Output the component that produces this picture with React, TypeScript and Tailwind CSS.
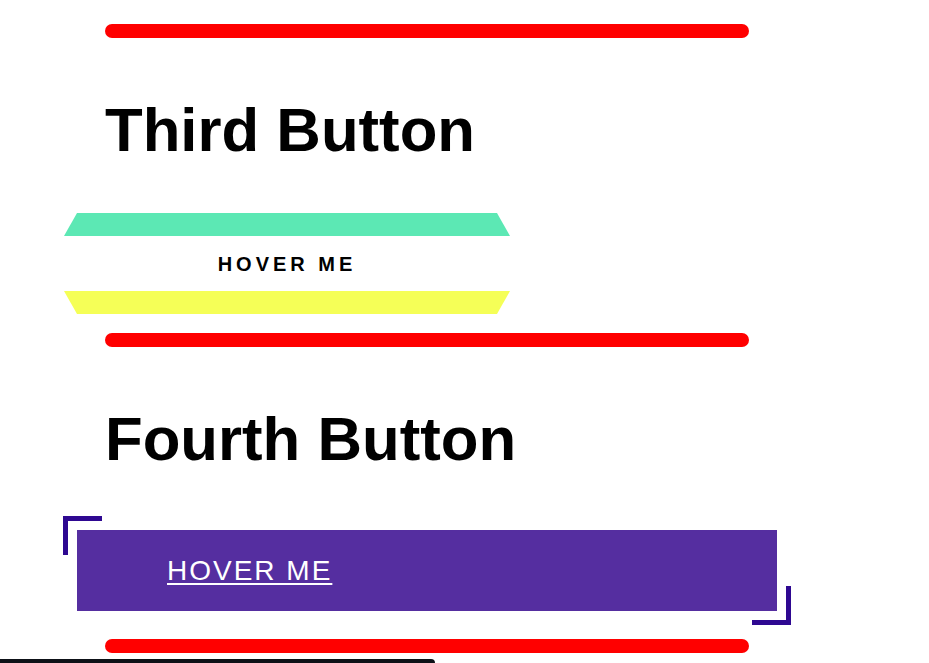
import React from 'react';

const RedBar = ({ className = '' }: { className?: string }) => (
    <div className={`ml-[105px] h-[14px] w-[644px] rounded-full bg-[#ff0000] ${className}`} />
);

const HexButton = () => (
    <button className="ml-[64px] mt-[52px] flex w-[446px] flex-col bg-white">
        <span className="block h-[23px] w-full bg-[#5ce8b4] [clip-path:polygon(13px_0,calc(100%-13px)_0,100%_100%,0_100%)]" />
        <span className="flex h-[55px] w-full items-center justify-center text-[20px] font-bold tracking-[4px] text-black">
            HOVER ME
        </span>
        <span className="block h-[23px] w-full bg-[#f5ff57] [clip-path:polygon(0_0,100%_0,calc(100%-13px)_100%,13px_100%)]" />
    </button>
);

const BracketButton = () => (
    <div className="relative ml-[77px] mt-[60px]">
        <span className="absolute left-[-14px] top-[-14px] h-[39px] w-[39px] border-l-[5px] border-t-[5px] border-[#2e0891]" />
        <button className="flex h-[81px] w-[700px] items-center bg-[#552ea0] pl-[90px] text-left">
            <span className="text-[28px] font-normal leading-[32px] tracking-[2px] text-white underline decoration-2 underline-offset-[3px]">
                HOVER ME
            </span>
        </button>
        <span className="absolute bottom-[-14px] right-[-14px] h-[39px] w-[39px] border-b-[5px] border-r-[5px] border-[#2e0891]" />
    </div>
);

export default function App() {
    return (
        <div className="h-[663px] w-full overflow-hidden bg-white font-['Liberation_Sans',Arial,sans-serif]">
            <main className="flex flex-col items-start pt-[24px]">
                <RedBar />
                <h2 className="ml-[105px] mt-[61px] text-[61.7px] font-bold leading-[62px] text-black">Third Button</h2>
                <HexButton />
                <RedBar className="mt-[19px]" />
                <h2 className="ml-[105px] mt-[61px] text-[61.7px] font-bold leading-[62px] text-black">Fourth Button</h2>
                <BracketButton />
                <RedBar className="mt-[28px]" />
                <div className="mt-[6px] h-[12px] w-[435px] rounded-tr-[4px] bg-[#0d1117]" />
            </main>
        </div>
    );
}
